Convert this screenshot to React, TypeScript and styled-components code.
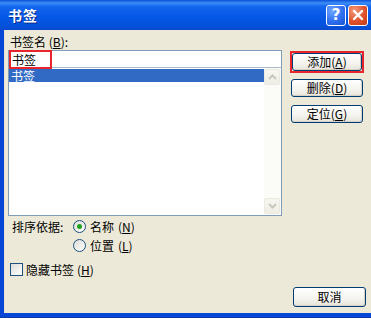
import React from "react";
import styled, { createGlobalStyle } from "styled-components";

const Global = createGlobalStyle`
  html, body { margin: 0; padding: 0; background: #ECE9D8; }
  body { font-family: "Noto Sans CJK SC", "Noto Sans", sans-serif; font-size: 12px; color: #000; }
  * { box-sizing: border-box; }
`;

const Window = styled.div`
  width: 371px;
  height: 318px;
  display: flex;
  flex-direction: column;
  overflow: hidden;
`;

const TitleBar = styled.div`
  height: 30px;
  flex: none;
  display: flex;
  align-items: center;
  padding: 0 3px 0 8px;
  background: linear-gradient(to bottom, #0a4fd8 0%, #3d8ef7 10%, #1466ef 22%, #0558e6 55%, #0452dc 85%, #0a49cc 100%);
`;

const Title = styled.div`
  flex: 1;
  color: #fff;
  font-weight: bold;
  font-size: 14px;
  letter-spacing: 1px;
  text-shadow: 1px 1px 0 #0a2a8a;
`;

const CaptionButton = styled.div<{ $kind: "help" | "close" }>`
  width: 20px;
  height: 21px;
  margin-left: 2px;
  border: 1px solid #fff;
  border-radius: 3px;
  display: flex;
  align-items: center;
  justify-content: center;
  color: #fff;
  font-family: "DejaVu Sans", sans-serif;
  font-weight: bold;
  font-size: 15px;
  background: ${(p) =>
    p.$kind === "help"
      ? "radial-gradient(circle at 30% 25%, #6fa6ff 0%, #2f6ff0 55%, #1b52d6 100%)"
      : "radial-gradient(circle at 30% 25%, #f39a7c 0%, #e0522c 55%, #c23a17 100%)"};
`;

const Frame = styled.div`
  flex: 1;
  display: flex;
  background: #0847d6;
  padding: 0 0 4px 4px;
  border-bottom: 1px solid #0a3aa8;
`;

const Body = styled.div`
  flex: 1;
  background: #ECE9D8;
  display: flex;
  flex-direction: column;
  padding: 5px 7px 0 4px;
  box-shadow: inset 1px 0 0 #e6e3d4;
`;

const TopSection = styled.div`
  display: flex;
  align-items: flex-start;
  gap: 8px;
`;

const LeftColumn = styled.div`
  width: 274px;
  display: flex;
  flex-direction: column;
`;

const Label = styled.div`
  height: 15px;
  line-height: 14px;
  padding-left: 2px;
  white-space: nowrap;
`;

const InputBox = styled.div`
  height: 18px;
  background: #fff;
  border: 1px solid #7f9db9;
  border-bottom: 1px solid #a9b8c8;
  display: flex;
  align-items: center;
  padding-left: 3px;
  position: relative;
`;

const Highlight = styled.div`
  position: absolute;
  left: 0;
  top: -1px;
  width: 43px;
  height: 19px;
  border: 2px solid #e8242c;
`;

const ListBox = styled.div`
  height: 148px;
  background: #fff;
  border: 1px solid #7f9db9;
  border-top: none;
  display: flex;
`;

const ListItems = styled.div`
  flex: 1;
  padding-top: 1px;
`;

const ListItem = styled.div<{ $selected?: boolean }>`
  height: 13px;
  line-height: 13px;
  padding-left: 2px;
  background: ${(p) => (p.$selected ? "#316ac5" : "transparent")};
  color: ${(p) => (p.$selected ? "#fff" : "#000")};
`;

const ScrollBar = styled.div`
  width: 17px;
  display: flex;
  flex-direction: column;
  justify-content: space-between;
  background: #fbfbf8;
  padding: 1px 1px 1px 0;
`;

const ScrollArrow = styled.div`
  height: 16px;
  border: 1px solid #ece9de;
  border-radius: 2px;
  background: linear-gradient(to bottom, #f7f6f1, #eeede6);
  display: flex;
  align-items: center;
  justify-content: center;
`;

const RightColumn = styled.div`
  width: 74px;
  display: flex;
  flex-direction: column;
  padding-top: 16px;
`;

const MarkFrame = styled.div`
  border: 2px solid #e8242c;
  padding: 0;
`;

const Button = styled.div<{ $gap?: number; $inset?: number }>`
  height: 18px;
  margin-top: ${(p) => p.$gap ?? 0}px;
  margin-left: ${(p) => p.$inset ?? 0}px;
  margin-right: ${(p) => p.$inset ?? 0}px;
  border: 1px solid #003c74;
  border-radius: 3px;
  background: linear-gradient(to bottom, #ffffff 0%, #f4f3ee 60%, #e6e4da 100%);
  display: flex;
  align-items: center;
  justify-content: center;
  font-size: 12px;
  line-height: 12px;
  white-space: nowrap;
  box-shadow: inset -1px -1px 0 #d6d0c5;
`;

const SortGrid = styled.div`
  display: grid;
  grid-template-columns: 61px auto;
  grid-auto-rows: 19px;
  margin-top: 1px;
  padding-left: 4px;
  align-items: center;
`;

const SortLabel = styled.span`
  grid-row: 1;
  grid-column: 1;
`;

const Option = styled.div`
  display: flex;
  align-items: center;
  gap: 4px;
  grid-column: 2;
  white-space: nowrap;
`;

const Radio = styled.div<{ $checked?: boolean }>`
  width: 13px;
  height: 13px;
  border-radius: 50%;
  border: 1px solid #1c5180;
  background: linear-gradient(135deg, #dcdcd7, #ffffff);
  display: flex;
  align-items: center;
  justify-content: center;
  &::after {
    content: "";
    width: 5px;
    height: 5px;
    border-radius: 50%;
    background: ${(p) => (p.$checked ? "#21a121" : "transparent")};
  }
`;

const CheckRow = styled.div`
  display: flex;
  align-items: center;
  gap: 3px;
  margin-top: 7px;
  padding-left: 2px;
  height: 14px;
`;

const CheckBox = styled.div`
  width: 13px;
  height: 13px;
  border: 1px solid #1c5180;
  background: linear-gradient(135deg, #dcdcd7, #ffffff);
`;

const Footer = styled.div`
  display: flex;
  justify-content: flex-end;
  margin-top: 11px;
`;

const CancelButton = styled(Button)`
  width: 73px;
  height: 20px;
  margin-right: -2px;
`;

const U = styled.span`
  text-decoration: underline;
`;

const Key = ({ k }: { k: string }) => (
  <span>
    {" "}(<U>{k}</U>)
  </span>
);

const Chevron = ({ up }: { up?: boolean }) => (
  <svg width="9" height="6" viewBox="0 0 9 6">
    <path
      d={up ? "M1 5 L4.5 1.5 L8 5" : "M1 1 L4.5 4.5 L8 1"}
      fill="none"
      stroke="#c9c7ba"
      strokeWidth="2"
    />
  </svg>
);

export default function App() {
  return (
    <>
      <Global />
      <Window>
        <TitleBar>
          <Title>书签</Title>
          <CaptionButton $kind="help">?</CaptionButton>
          <CaptionButton $kind="close">
            <svg width="12" height="12" viewBox="0 0 12 12">
              <path d="M2 2 L10 10 M10 2 L2 10" stroke="#fff" strokeWidth="2.4" strokeLinecap="round" />
            </svg>
          </CaptionButton>
        </TitleBar>
        <Frame>
          <Body>
            <TopSection>
              <LeftColumn>
                <Label>
                  书签名<Key k="B" />:
                </Label>
                <InputBox>
                  书签
                  <Highlight />
                </InputBox>
                <ListBox>
                  <ListItems>
                    <ListItem $selected>书签</ListItem>
                  </ListItems>
                  <ScrollBar>
                    <ScrollArrow>
                      <Chevron up />
                    </ScrollArrow>
                    <ScrollArrow>
                      <Chevron />
                    </ScrollArrow>
                  </ScrollBar>
                </ListBox>
              </LeftColumn>
              <RightColumn>
                <MarkFrame>
                  <Button>
                    添加<Key k="A" />
                  </Button>
                </MarkFrame>
                <Button $gap={6} $inset={1}>
                  删除<Key k="D" />
                </Button>
                <Button $gap={8} $inset={1}>
                  定位<Key k="G" />
                </Button>
              </RightColumn>
            </TopSection>
            <SortGrid>
              <SortLabel>排序依据:</SortLabel>
              <Option>
                <Radio $checked />
                名称<Key k="N" />
              </Option>
              <Option>
                <Radio />
                位置<Key k="L" />
              </Option>
            </SortGrid>
            <CheckRow>
              <CheckBox />
              隐藏书签<Key k="H" />
            </CheckRow>
            <Footer>
              <CancelButton>取消</CancelButton>
            </Footer>
          </Body>
        </Frame>
      </Window>
    </>
  );
}
